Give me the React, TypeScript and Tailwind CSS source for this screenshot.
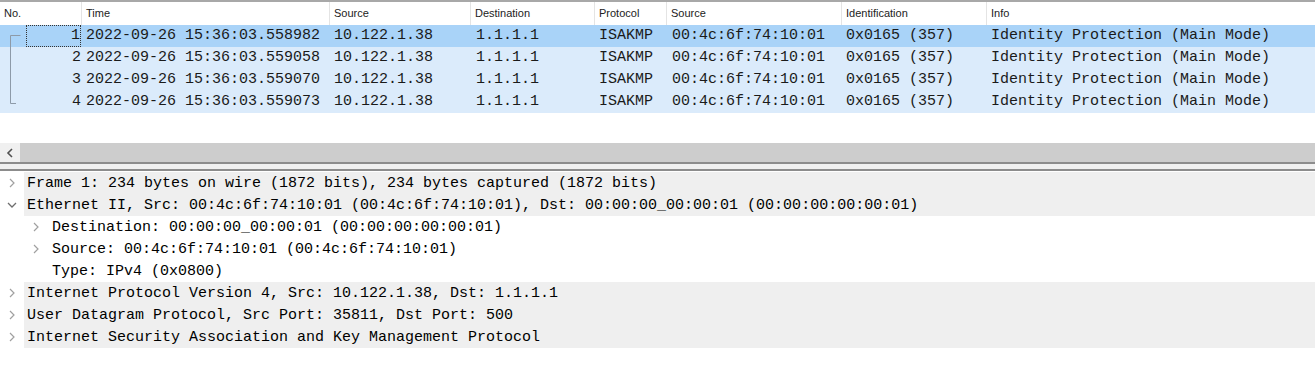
import React from 'react';

const cols = [
  {label: 'No.', w: 'w-[82px]'},
  {label: 'Time', w: 'w-[248px]'},
  {label: 'Source', w: 'w-[141px]'},
  {label: 'Destination', w: 'w-[124px]'},
  {label: 'Protocol', w: 'w-[72px]'},
  {label: 'Source', w: 'w-[175px]'},
  {label: 'Identification', w: 'w-[145px]'},
  {label: 'Info', w: 'flex-1'},
];

const packets = [
  {no: '1', time: '2022-09-26 15:36:03.558982'},
  {no: '2', time: '2022-09-26 15:36:03.559058'},
  {no: '3', time: '2022-09-26 15:36:03.559070'},
  {no: '4', time: '2022-09-26 15:36:03.559073'},
];

const mono = "font-['Liberation_Mono','DejaVu_Sans_Mono',monospace] text-[15px]";

const ChevronRight = () => (
  <svg width="6" height="10" viewBox="0 0 6 10" className="block">
    <path d="M1 1 L5 5 L1 9" fill="none" stroke="#a0a0a0" strokeWidth="1.2" />
  </svg>
);

const ChevronDown = () => (
  <svg width="10" height="6" viewBox="0 0 10 6" className="block">
    <path d="M1 1 L5 5 L9 1" fill="none" stroke="#6e6e6e" strokeWidth="1.3" />
  </svg>
);

const TreeRow = ({text, open}: {text: string; open?: boolean}) => (
  <div className="flex h-[22px] items-center">
    <div className="w-[24px] flex justify-center">{open ? <ChevronDown /> : <ChevronRight />}</div>
    <div className="flex-1 h-full flex items-center pl-[3px] pt-[2px] bg-[#efefef]">{text}</div>
  </div>
);

const ChildRow = ({text, expandable = true}: {text: string; expandable?: boolean}) => (
  <div className="flex h-[22px] items-center pl-[24px]">
    <div className="w-[24px] flex justify-center">{expandable && <ChevronRight />}</div>
    <div className="pl-[4px] pt-[2px]">{text}</div>
  </div>
);

export default function App() {
  return (
    <div className="w-[1315px] h-[367px] bg-white overflow-hidden text-[#1a1a1a]">
      {/* packet list header */}
      <div className="flex h-[25px] border-t-2 border-[#a8a8a8] font-['Liberation_Sans',Arial,sans-serif] text-[11px] text-[#222]">
        {cols.map((c, i) => (
          <div key={i} className={`${c.w} h-full flex items-center pl-[4px] ${i < cols.length - 1 ? 'border-r border-[#e4e4e4]' : ''}`}>
            {c.label}
          </div>
        ))}
      </div>

      {/* packet rows */}
      <div className={`relative ${mono}`}>
        {packets.map((p, i) => (
          <div key={p.no} className={`flex h-[22px] items-center whitespace-pre ${i === 0 ? 'bg-[#a9d3f8]' : 'bg-[#dbebfb]'}`}>
            <div className="w-[82px] h-full flex items-center justify-end pr-[1px] pl-[26px]">
              <div className={`w-full h-full flex items-center justify-end pt-[1px] ${i === 0 ? 'border border-dotted border-[#333]' : ''}`}>{p.no}</div>
            </div>
            <div className="w-[248px] pl-[4px] pt-[1px]">{p.time}</div>
            <div className="w-[141px] pl-[4px] pt-[1px]">10.122.1.38</div>
            <div className="w-[124px] pl-[5px] pt-[1px]">1.1.1.1</div>
            <div className="w-[72px] pl-[4px] pt-[1px]">ISAKMP</div>
            <div className="w-[175px] pl-[5px] pt-[1px]">00:4c:6f:74:10:01</div>
            <div className="w-[145px] pl-[4px] pt-[1px]">0x0165 (357)</div>
            <div className="flex-1 pl-[4px] pt-[1px]">Identity Protection (Main Mode)</div>
          </div>
        ))}
        <svg className="absolute left-0 top-0" width="24" height="88">
          <path d="M20.5 10.5 H10.5 V78.5 H16" fill="none" stroke="#8d9aa8" strokeWidth="1" />
        </svg>
      </div>

      {/* empty space */}
      <div className="h-[30px]" />

      {/* horizontal scrollbar */}
      <div className="flex h-[19px]">
        <div className="w-[20px] bg-[#f0f0f0] flex items-center justify-center">
          <svg width="8" height="10" viewBox="0 0 8 10">
            <path d="M6 1 L2 5 L6 9" fill="none" stroke="#505050" strokeWidth="1.6" />
          </svg>
        </div>
        <div className="flex-1 bg-[#cdcdcd]" />
      </div>

      {/* splitter */}
      <div className="h-[2px] bg-[#8c8c8c]" />
      <div className="h-[5px] bg-[#f0f0f0]" />
      <div className="h-[2px] bg-[#8c8c8c]" />
      <div className="h-[1px]" />

      {/* packet details */}
      <div className={`${mono} text-black whitespace-pre`}>
        <TreeRow text="Frame 1: 234 bytes on wire (1872 bits), 234 bytes captured (1872 bits)" />
        <TreeRow open text="Ethernet II, Src: 00:4c:6f:74:10:01 (00:4c:6f:74:10:01), Dst: 00:00:00_00:00:01 (00:00:00:00:00:01)" />
        <ChildRow text="Destination: 00:00:00_00:00:01 (00:00:00:00:00:01)" />
        <ChildRow text="Source: 00:4c:6f:74:10:01 (00:4c:6f:74:10:01)" />
        <ChildRow expandable={false} text="Type: IPv4 (0x0800)" />
        <TreeRow text="Internet Protocol Version 4, Src: 10.122.1.38, Dst: 1.1.1.1" />
        <TreeRow text="User Datagram Protocol, Src Port: 35811, Dst Port: 500" />
        <TreeRow text="Internet Security Association and Key Management Protocol" />
      </div>
    </div>
  );
}
